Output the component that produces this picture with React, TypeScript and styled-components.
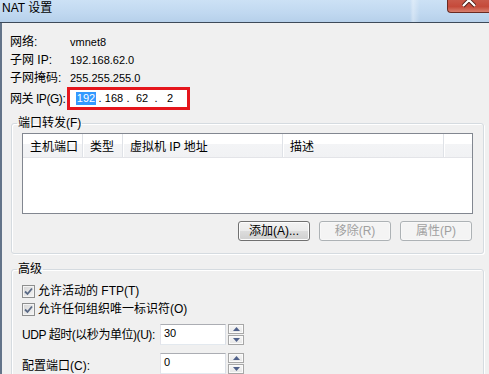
import React from "react";
import styled, { createGlobalStyle } from "styled-components";

const GlobalStyle = createGlobalStyle`
  html, body {
    margin: 0;
    padding: 0;
    width: 489px;
    height: 374px;
    overflow: hidden;
    background: #f0f0f0;
  }
  body {
    font-family: "Liberation Sans", "Noto Sans CJK SC", sans-serif;
    font-size: 12px;
    color: #000;
  }
  * {
    box-sizing: border-box;
  }
`;

const Window = styled.div`
  width: 489px;
  height: 374px;
  display: flex;
  flex-direction: column;
  overflow: hidden;
  background: #f0f0f0;
`;

const TitleBar = styled.div`
  flex: none;
  height: 23px;
  display: flex;
  justify-content: space-between;
  align-items: flex-start;
  border-bottom: 1px solid #3d4a59;
  background:
    linear-gradient(90deg, transparent 410px, rgba(255, 255, 255, 0.35) 413px, transparent 420px),
    linear-gradient(180deg, #cce1f5 0%, #c0d8f0 60%, #b6d0ea 100%);
`;

const TitleText = styled.span`
  padding-left: 2px;
  line-height: 17px;
  font-size: 12px;
  color: #000;
`;

const CloseButton = styled.div`
  width: 42px;
  height: 13px;
  display: flex;
  justify-content: center;
  align-items: flex-start;
  overflow: hidden;
  border: 1px solid #6a2a22;
  border-top: none;
  border-right: none;
  border-bottom-left-radius: 4px;
  background: linear-gradient(180deg, #c9594a 0%, #c54a3a 55%, #d8806f 100%);
`;

const Client = styled.div`
  flex: 1;
  border-left: 2px solid #637489;
  padding: 9px 5px 0 8px;
  display: flex;
  flex-direction: column;
`;

const InfoGrid = styled.div`
  display: grid;
  grid-template-columns: 60px 1fr;
  grid-template-rows: 19px 18px 18px 23px;
  align-items: center;
`;

const Label = styled.span<{ $tight?: boolean; $shift?: number }>`
  line-height: 14px;
  white-space: nowrap;
  letter-spacing: ${(p) => (p.$tight ? "-0.45px" : "0")};
  position: relative;
  top: ${(p) => p.$shift ?? 0}px;
`;

const Value = styled.span`
  font-size: 11px;
  line-height: 14px;
`;

const IpBox = styled.div`
  width: 123px;
  height: 23px;
  margin-left: -3px;
  border: 3px solid #e5161c;
  background: #fff;
  display: flex;
  align-items: center;
  padding-left: 4px;
  font-size: 11px;
`;

const IpOctet = styled.span`
  width: 24px;
  text-align: center;
  line-height: 13px;
`;

const IpDot = styled.span`
  width: 4px;
  text-align: center;
  line-height: 13px;
`;

const Selected = styled.span`
  display: inline-block;
  background: #3399ff;
  color: #fff;
  line-height: 13px;
  padding: 0 0.5px;
`;

const Group = styled.fieldset<{ $gap: number; $top: number }>`
  margin: ${(p) => p.$gap}px 0 0 1px;
  padding: ${(p) => p.$top}px 10px 12px 10px;
  min-width: 0;
  border: 1px solid #d5dbe0;
  border-radius: 3px;
  box-shadow: inset 1px 1px 0 #fff, 1px 1px 0 #fff;
`;

const Legend = styled.legend`
  margin-left: -5px;
  padding: 0 1px;
  height: 16px;
  line-height: 16px;
`;

const ListView = styled.div`
  height: 81px;
  border: 1px solid #828790;
  background: #fff;
`;

const HeaderRow = styled.div`
  display: grid;
  grid-template-columns: 60px 40px 160px 161px 1fr;
  height: 24px;
  border-bottom: 1px solid #e3e4e8;
  background: linear-gradient(180deg, #ffffff 0%, #ffffff 45%, #f3f4f6 45%, #f1f2f4 100%);
`;

const HeaderCell = styled.div`
  display: flex;
  align-items: center;
  padding-left: 7px;
  white-space: nowrap;
  border-right: 1px solid #dfe2e7;
  box-shadow: 1px 0 0 #fff;
  &:last-child {
    border-right: none;
    box-shadow: none;
  }
`;

const ButtonRow = styled.div`
  display: flex;
  justify-content: flex-end;
  gap: 9px;
  margin-top: 7px;
  padding-right: 1px;
`;

const Button = styled.button<{ $disabled?: boolean }>`
  width: 72px;
  height: 20px;
  padding: 0;
  font: inherit;
  font-size: 12px;
  line-height: 14px;
  border-radius: 3px;
  border: 1px solid ${(p) => (p.$disabled ? "#adb2b5" : "#707070")};
  color: ${(p) => (p.$disabled ? "#a0a0a0" : "#000")};
  background: ${(p) =>
    p.$disabled
      ? "#f4f4f4"
      : "linear-gradient(180deg, #f2f2f2 0%, #ebebeb 50%, #dddddd 50%, #cfcfcf 100%)"};
  box-shadow: inset 0 0 0 1px ${(p) => (p.$disabled ? "#f8f8f8" : "#fcfcfc")};
`;

const CheckRow = styled.label`
  display: flex;
  align-items: center;
  gap: 3px;
  height: 18px;
  line-height: 14px;
`;

const CheckBox = styled.span`
  width: 13px;
  height: 13px;
  flex: none;
  border: 1px solid #8e8f8f;
  background: linear-gradient(135deg, #d4d4d4 0%, #e8e8e8 60%, #f6f6f6 100%);
  box-shadow: inset 0 0 0 1px #f4f4f4;
  display: flex;
  align-items: center;
  justify-content: center;
`;

const SpinRow = styled.div<{ $gap: number }>`
  display: grid;
  grid-template-columns: 138px auto;
  align-items: center;
  height: 21px;
  margin-top: ${(p) => p.$gap}px;
`;

const SpinBox = styled.div`
  display: flex;
  gap: 2px;
`;

const SpinInput = styled.div`
  width: 66px;
  height: 21px;
  border: 1px solid;
  border-color: #abadb3 #dbdfe6 #e3e9ef #e2e3ea;
  background: #fff;
  padding-left: 3px;
  font-size: 11px;
  line-height: 17px;
`;

const SpinButtons = styled.div`
  display: flex;
  flex-direction: column;
  gap: 1px;
`;

const SpinButton = styled.div`
  width: 16px;
  height: 10px;
  border: 1px solid #a7a7a7;
  background: linear-gradient(180deg, #f6f6f6 0%, #e6e6e6 100%);
  box-shadow: inset 0 0 0 1px #fbfbfb;
  display: flex;
  align-items: center;
  justify-content: center;
`;

const Arrow = ({ up }: { up?: boolean }) => (
  <svg width="7" height="4" viewBox="0 0 7 4">
    <polygon points={up ? "0,4 7,4 3.5,0" : "0,0 7,0 3.5,4"} fill="#4f6089" />
  </svg>
);

const Check = () => (
  <svg width="9" height="9" viewBox="0 0 9 9">
    <path d="M1 4.5 L3.5 7 L8 1.5" fill="none" stroke="#5a6a86" strokeWidth="1.8" />
  </svg>
);

const Spin = ({ value }: { value: string }) => (
  <SpinBox>
    <SpinInput>{value}</SpinInput>
    <SpinButtons>
      <SpinButton>
        <Arrow up />
      </SpinButton>
      <SpinButton>
        <Arrow />
      </SpinButton>
    </SpinButtons>
  </SpinBox>
);

const columns = ["主机端口", "类型", "虚拟机 IP 地址", "描述", ""];

const App = () => {
  return (
    <Window>
      <GlobalStyle />
      <TitleBar>
        <TitleText>NAT 设置</TitleText>
        <CloseButton>
          <svg width="14" height="10" viewBox="0 0 14 10">
            <path
              d="M1 -6 L7 0 L13 -6 M1 6 L7 0 L13 6"
              fill="none"
              stroke="#4a1e18"
              strokeWidth="4"
            />
            <path
              d="M1 -6 L7 0 L13 -6 M1 6 L7 0 L13 6"
              fill="none"
              stroke="#ffffff"
              strokeWidth="2.2"
            />
          </svg>
        </CloseButton>
      </TitleBar>

      <Client>
        <InfoGrid>
          <Label>网络:</Label>
          <Value>vmnet8</Value>
          <Label>子网 IP:</Label>
          <Value>192.168.62.0</Value>
          <Label>子网掩码:</Label>
          <Value>255.255.255.0</Value>
          <Label $tight>网关 IP(G):</Label>
          <IpBox>
            <IpOctet>
              <Selected>192</Selected>
            </IpOctet>
            <IpDot>.</IpDot>
            <IpOctet>168</IpOctet>
            <IpDot>.</IpDot>
            <IpOctet>62</IpOctet>
            <IpDot>.</IpDot>
            <IpOctet>2</IpOctet>
          </IpBox>
        </InfoGrid>

        <Group $gap={5} $top={2}>
          <Legend>端口转发(F)</Legend>
          <ListView>
            <HeaderRow>
              {columns.map((c, i) => (
                <HeaderCell key={i}>{c}</HeaderCell>
              ))}
            </HeaderRow>
          </ListView>
          <ButtonRow>
            <Button>添加(A)...</Button>
            <Button $disabled>移除(R)</Button>
            <Button $disabled>属性(P)</Button>
          </ButtonRow>
        </Group>

        <Group $gap={7} $top={5}>
          <Legend>高级</Legend>
          <CheckRow>
            <CheckBox>
              <Check />
            </CheckBox>
            允许活动的 FTP(T)
          </CheckRow>
          <CheckRow>
            <CheckBox>
              <Check />
            </CheckBox>
            允许任何组织唯一标识符(O)
          </CheckRow>
          <SpinRow $gap={6}>
            <Label $tight>UDP 超时(以秒为单位)(U):</Label>
            <Spin value="30" />
          </SpinRow>
          <SpinRow $gap={8}>
            <Label $shift={2}>配置端口(C):</Label>
            <Spin value="0" />
          </SpinRow>
        </Group>
      </Client>
    </Window>
  );
};

export default App;
